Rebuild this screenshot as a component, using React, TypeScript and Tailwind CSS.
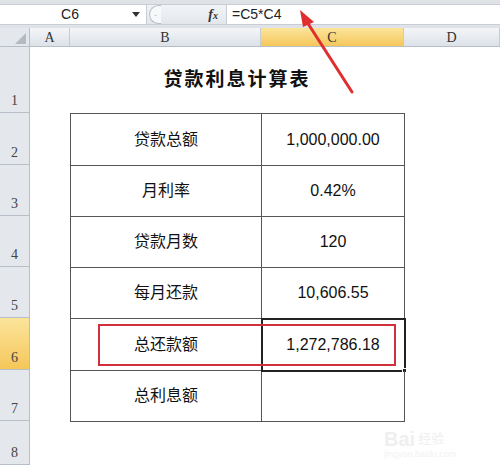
import type { ReactNode } from 'react'

const rows = [
  { label: '贷款总额', value: '1,000,000.00' },
  { label: '月利率', value: '0.42%' },
  { label: '贷款月数', value: '120' },
  { label: '每月还款', value: '10,606.55' },
  { label: '总还款额', value: '1,272,786.18' },
  { label: '总利息额', value: '' },
]

const rowHeights = ['h-[66px]', 'h-[52px]', 'h-[51px]', 'h-[51px]', 'h-[51px]', 'h-[52px]', 'h-[51px]', 'h-[44px]']

function ColHeader({ children, active, className }: { children?: ReactNode; active?: boolean; className: string }) {
  return <div className={`flex items-center justify-center border-r border-[#c5cbd3] text-[14px] text-[#333] ${active ? 'bg-gradient-to-b from-[#fbe49a] to-[#f5c759]' : 'bg-gradient-to-b from-[#f3f5f8] to-[#dde2e8]'} ${className}`}>
    {children}
  </div>
}

export default function App() {
  return <div className="relative h-[465px] w-[500px] overflow-hidden bg-white font-['Liberation_Sans','Noto_Sans_CJK_SC',sans-serif]">
    {/* formula bar */}
    <div className="h-[4px] bg-[#dfe3e8]" />
    <div className="flex h-[21px] border-y border-[#c9ced6] bg-white">
      <div className="flex w-[147px] items-center border-r border-[#c9ced6]">
        <span className="flex-1 pl-[8px] text-center text-[14px] text-[#222]">C6</span>
        <svg viewBox="0 0 8 5" className="mr-[6px] h-[5px] w-[8px] fill-[#333]"><path d="M0 0h8L4 5z" /></svg>
      </div>
      <div className="flex w-[79px] items-center bg-gradient-to-b from-[#f2f4f7] to-[#e3e7ec]">
        <div className="ml-[2px] flex h-[19px] w-[12px] items-center justify-center rounded-l-full border border-r-0 border-[#b8bec6] bg-[#f7f8fa] text-[8px] text-[#aaa]">-</div>
        <span className="ml-auto mr-[8px] font-['Liberation_Serif',serif] text-[14px] font-bold italic text-[#333]">f<span className="text-[10px]">x</span></span>
      </div>
      <div className="flex flex-1 items-center border-l border-[#c9ced6] pl-[5px] text-[14px] text-[#222]">=C5*C4</div>
    </div>
    <div className="h-[3px] bg-[#dfe3e8]" />

    {/* sheet */}
    <div className="flex font-['Liberation_Serif','Noto_Sans_CJK_SC',serif]">
      <div className="w-[30px] shrink-0">
        <div className="relative h-[19px] border-b border-r border-[#b7bec8] bg-[#e4e8ed]">
          <svg viewBox="0 0 10 10" className="absolute bottom-[2px] right-[3px] h-[11px] w-[11px] fill-[#b3bac3]"><path d="M10 0v10H0z" /></svg>
        </div>
        {rowHeights.map((h, i) => <div key={i} className={`flex items-end justify-center border-b border-r border-[#b7bec8] pb-[1px] text-[14px] text-[#444] ${h} ${i === 5 ? 'bg-gradient-to-b from-[#fbe49a] to-[#f5c759]' : 'bg-[#e4e8ed]'}`}>{i + 1}</div>)}
      </div>

      <div className="flex-1">
        <div className="flex h-[19px] border-b border-[#b7bec8]">
          <ColHeader className="w-[40px]">A</ColHeader>
          <ColHeader className="w-[191px]">B</ColHeader>
          <ColHeader className="w-[143px]" active>C</ColHeader>
          <ColHeader className="flex-1">D</ColHeader>
        </div>

        <div className="flex h-[66px] items-center pl-[40px] font-['Liberation_Sans','Noto_Sans_CJK_SC',sans-serif]">
          <div className="w-[334px] text-center text-[19px] font-bold tracking-[2px] text-[#111]">贷款利息计算表</div>
        </div>

        <div className="ml-[40px] w-[335px] border-l border-t border-[#555] font-['Liberation_Sans','Noto_Sans_CJK_SC',sans-serif] text-[16px] text-[#111]">
          {rows.map((row, i) => <div key={row.label} className={`flex ${i === 0 || i === 4 ? 'h-[52px]' : 'h-[51px]'}`}>
            <div className="flex w-[191px] items-center justify-center border-b border-r border-[#555]">{row.label}</div>
            <div className={`relative flex flex-1 items-center justify-center border-b border-r border-[#555] ${i === 4 ? 'outline-2 outline-[#222] -outline-offset-1' : ''}`}>
              {row.value}
              {i === 4 && <div className="absolute -bottom-[3px] -right-[3px] h-[5px] w-[5px] border border-white bg-[#222]" />}
            </div>
          </div>)}
        </div>
      </div>
    </div>

    {/* annotation: red box */}
    <div className="absolute left-[98px] top-[324px] h-[42px] w-[298px] border-2 border-[#d22f3c]" />

    {/* annotation: arrow */}
    <svg className="absolute left-0 top-0" width="500" height="465" viewBox="0 0 500 465">
      <line x1="352" y1="92" x2="307" y2="22" stroke="#e02d2d" strokeWidth="3" strokeLinecap="round" />
      <path d="M300 10 L314 22 L303 27 Z" fill="#e02d2d" />
    </svg>

    {/* watermark */}
    <div className="absolute left-[384px] top-[424px] flex items-center gap-[3px] text-[#efefef]">
      <span className="font-['Liberation_Sans',sans-serif] text-[20px] font-bold">Bai</span>
      <span className="text-[13px] leading-[14px]">经验</span>
    </div>
    <div className="absolute left-[384px] top-[448px] font-['Liberation_Sans',sans-serif] text-[9px] text-[#f2f2f2]">jingyan.baidu.com</div>
  </div>
}
